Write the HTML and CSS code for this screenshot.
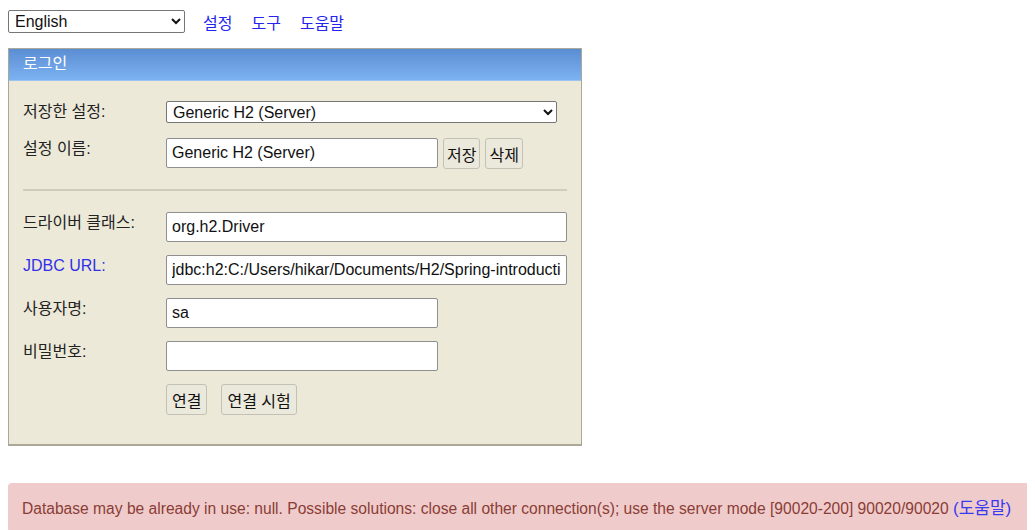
FILE: index.html
```html
<!DOCTYPE html>
<html lang="ko">
<head>
    <meta charset="UTF-8">
    <title>H2 Console</title>
    <link rel="stylesheet" href="styles.css">
</head>
<body>
    <div class="top-bar">
        <select class="lang-select">
            <option>English</option>
        </select>
        <a href="#" class="top-link">설정</a>
        <a href="#" class="top-link">도구</a>
        <a href="#" class="top-link">도움말</a>
    </div>

    <form class="login-panel">
        <div class="login-title">로그인</div>
        <div class="login-body">
            <div class="form-row first-row">
                <label class="row-label">저장한 설정:</label>
                <select class="setting-select">
                    <option>Generic H2 (Server)</option>
                </select>
            </div>
            <div class="form-row">
                <label class="row-label">설정 이름:</label>
                <div class="row-inline">
                    <input type="text" class="field short" value="Generic H2 (Server)">
                    <button type="button" class="btn compact">저장</button>
                    <button type="button" class="btn compact">삭제</button>
                </div>
            </div>
            <hr class="divider">
            <div class="form-row">
                <label class="row-label">드라이버 클래스:</label>
                <input type="text" class="field wide" value="org.h2.Driver">
            </div>
            <div class="form-row">
                <label class="row-label link-label">JDBC URL:</label>
                <input type="text" class="field wide" value="jdbc:h2:C:/Users/hikar/Documents/H2/Spring-introduction">
            </div>
            <div class="form-row">
                <label class="row-label">사용자명:</label>
                <input type="text" class="field short" value="sa">
            </div>
            <div class="form-row">
                <label class="row-label">비밀번호:</label>
                <input type="password" class="field short">
            </div>
            <div class="form-row">
                <span class="row-label"></span>
                <div class="row-inline gap-wide">
                    <button type="button" class="btn">연결</button>
                    <button type="button" class="btn">연결 시험</button>
                </div>
            </div>
        </div>
    </form>

    <div class="error-box">
        Database may be already in use: null. Possible solutions: close all other connection(s); use the server mode [90020-200] 90020/90020 <a href="#" class="error-link">(도움말)</a>
    </div>
</body>
</html>
```

FILE: styles.css
```css
html {
    overflow: hidden;
}
body {
    margin: 8px;
    font-family: "Liberation Sans", "Noto Sans CJK KR", sans-serif;
    font-size: 16px;
    color: #222;
    background-color: #fff;
}
select, input, button {
    font-family: "Liberation Sans", "Noto Sans CJK KR", sans-serif;
    font-size: 16px;
    color: #111;
}
.top-bar {
    display: flex;
    align-items: center;
    height: 25px;
    margin-top: 1px;
}
.lang-select {
    width: 177px;
    height: 23px;
    padding: 0 2px;
    border: 1px solid #767676;
    border-radius: 2px;
    background-color: #fff;
    margin-right: 18px;
}
.top-link {
    color: #2424ee;
    text-decoration: none;
    margin-right: 19px;
}
.login-panel {
    display: block;
    width: 572px;
    margin-top: 14px;
    border: 1px solid #aca899;
    border-bottom: 2px solid #aca899;
    background-color: #ece9d8;
}
.login-title {
    height: 31px;
    line-height: 30px;
    padding-left: 14px;
    color: #fff;
    background: linear-gradient(to bottom, #5b8dd2, #7cb2f2);
    border-bottom: 1px solid #9cc2f0;
}
.login-body {
    padding: 20px 14px 29px 14px;
}
.form-row {
    display: flex;
    align-items: flex-start;
    margin-bottom: 13px;
}
.form-row.first-row {
    margin-bottom: 15px;
}
.form-row:last-child {
    margin-bottom: 0;
}
.row-label {
    width: 143px;
    flex-shrink: 0;
    line-height: 18px;
    padding-top: 2px;
    color: #222;
}
.link-label {
    color: #3030e8;
}
.row-inline {
    display: flex;
    gap: 5px;
}
.gap-wide {
    gap: 14px;
}
.setting-select {
    width: 391px;
    height: 22px;
    padding: 0 2px;
    border: 1px solid #767676;
    border-radius: 2px;
    background-color: #fff;
}
.field {
    height: 30px;
    box-sizing: border-box;
    padding: 2px 5px;
    border: 1px solid #8f8f8f;
    border-radius: 2px;
    background-color: #fff;
}
.field.short {
    width: 272px;
}
.field.wide {
    width: 402px;
}
.btn {
    height: 31px;
    padding: 0 5px;
    border: 1px solid #c3c1b6;
    border-radius: 3px;
    background-color: #ebe8dc;
    color: #111;
}
.btn.compact {
    padding: 0 3px;
}
.divider {
    border: none;
    border-top: 2px solid #cfcbbd;
    margin: 20px 0 21px 0;
}
.error-box {
    margin-top: 37px;
    margin-right: -20px;
    padding: 17px 14px 15px 14px;
    line-height: 18px;
    border-radius: 4px;
    background-color: #efcccb;
    color: #8b3c36;
    font-size: 15.6px;
}
.error-link {
    color: #3a3af0;
    text-decoration: none;
    font-size: 17px;
}
```
